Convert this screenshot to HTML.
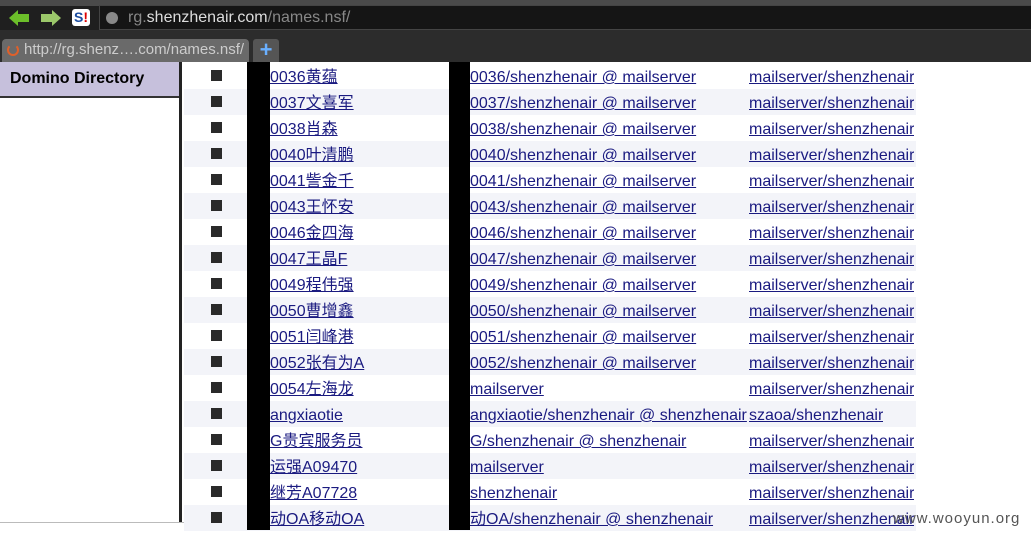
<!DOCTYPE html>
<html><head><meta charset="utf-8"><style>
*{margin:0;padding:0;box-sizing:border-box}
body{width:1031px;height:530px;overflow:hidden;background:#fff;font-family:"Liberation Sans","Noto Sans CJK SC",sans-serif;position:relative}
.top{position:absolute;left:0;top:0;width:1031px;height:8px;background:#4a4a4a}
.tb{position:absolute;left:0;top:6px;width:1031px;height:26px;background:#1f1f1f}
.tabs{position:absolute;left:0;top:30px;width:1031px;height:32px;background:#2c2c2c}
.url{position:absolute;left:99px;top:5px;width:940px;height:25px;background:#151515;border:1px solid #444;color:#888;font-size:16px;line-height:23px;padding-left:28px}
.url b{font-weight:normal;color:#ddd}
.tab{position:absolute;left:2px;top:39px;width:247px;height:23px;background:#6a6a6a;border-radius:4px 4px 0 0;color:#ccc;font-size:15px;line-height:22px;padding-left:22px}
.plus{position:absolute;left:253px;top:39px;width:26px;height:23px;background:#555;border-radius:3px 3px 0 0;color:#6ab0ff;font-size:22px;line-height:21px;text-align:center;font-weight:bold}
.left{position:absolute;left:0;top:62px;width:182px;height:468px;background:#fff;border-right:3px solid #222}
.hd{height:36px;background:#c6c0dc;border-bottom:2px solid #333;font-weight:bold;font-size:16px;padding:8px 10px}
.row{position:absolute;left:184px;height:26px;width:732px;font-size:16px;line-height:26px}
.row.alt{background:#f3f4f9}
.sq{position:absolute;left:27px;top:7px;width:11px;height:11px;background:#2a2a2a}
a{color:#1a1a80;text-decoration:underline;position:absolute;top:2px;white-space:nowrap;overflow:hidden}
.c1{left:86px;width:175px}.c2{left:286px;width:277px}.c3{left:565px}
.bar{position:absolute;top:62px;height:468px;background:#000}
.wm{position:absolute;left:893px;top:510px;color:#555;font-size:15px;letter-spacing:1px}
</style></head><body>
<div class="top"></div><div class="tb"></div><div class="tabs"></div>
<svg style="position:absolute;left:8px;top:9px" width="22" height="18"><path d="M1 9 L10 1 V5 H21 V13 H10 V17Z" fill="#6cbf2a"/></svg>
<svg style="position:absolute;left:40px;top:9px" width="22" height="18"><path d="M21 9 L12 1 V5 H1 V13 H12 V17Z" fill="#9bc86a"/></svg>
<div style="position:absolute;left:72px;top:9px;width:18px;height:17px;background:#fff;border-radius:3px;color:#1b4da0;font-weight:bold;font-size:14px;line-height:17px;text-align:center">S<span style="color:#d00">!</span></div>
<div class="url"><span style="position:absolute;left:6px;top:6px;width:12px;height:12px;border-radius:50%;background:#888"></span>rg.<b>shenzhenair.com</b>/names.nsf/</div>
<div class="tab"><span style="position:absolute;left:5px;top:5px;width:12px;height:12px;border:2px solid #e0602a;border-top-color:transparent;border-radius:50%"></span>http://rg.shenz….com/names.nsf/</div>
<div class="plus">+</div>
<div class="left"><div class="hd">Domino Directory</div></div>
<div style="position:absolute;left:0;top:522px;width:248px;height:8px;background:#fff;border-top:1px solid #bbb;border-right:1px solid #bbb"></div>
<div class="row" style="top:63px"><span class="sq"></span><a class="c1">0036黄蕴</a><a class="c2">0036/shenzhenair @ mailserver</a><a class="c3">mailserver/shenzhenair</a></div>
<div class="row alt" style="top:89px"><span class="sq"></span><a class="c1">0037文喜军</a><a class="c2">0037/shenzhenair @ mailserver</a><a class="c3">mailserver/shenzhenair</a></div>
<div class="row" style="top:115px"><span class="sq"></span><a class="c1">0038肖森</a><a class="c2">0038/shenzhenair @ mailserver</a><a class="c3">mailserver/shenzhenair</a></div>
<div class="row alt" style="top:141px"><span class="sq"></span><a class="c1">0040叶清鹏</a><a class="c2">0040/shenzhenair @ mailserver</a><a class="c3">mailserver/shenzhenair</a></div>
<div class="row" style="top:167px"><span class="sq"></span><a class="c1">0041訾金千</a><a class="c2">0041/shenzhenair @ mailserver</a><a class="c3">mailserver/shenzhenair</a></div>
<div class="row alt" style="top:193px"><span class="sq"></span><a class="c1">0043王怀安</a><a class="c2">0043/shenzhenair @ mailserver</a><a class="c3">mailserver/shenzhenair</a></div>
<div class="row" style="top:219px"><span class="sq"></span><a class="c1">0046金四海</a><a class="c2">0046/shenzhenair @ mailserver</a><a class="c3">mailserver/shenzhenair</a></div>
<div class="row alt" style="top:245px"><span class="sq"></span><a class="c1">0047王晶F</a><a class="c2">0047/shenzhenair @ mailserver</a><a class="c3">mailserver/shenzhenair</a></div>
<div class="row" style="top:271px"><span class="sq"></span><a class="c1">0049程伟强</a><a class="c2">0049/shenzhenair @ mailserver</a><a class="c3">mailserver/shenzhenair</a></div>
<div class="row alt" style="top:297px"><span class="sq"></span><a class="c1">0050曹增鑫</a><a class="c2">0050/shenzhenair @ mailserver</a><a class="c3">mailserver/shenzhenair</a></div>
<div class="row" style="top:323px"><span class="sq"></span><a class="c1">0051闫峰港</a><a class="c2">0051/shenzhenair @ mailserver</a><a class="c3">mailserver/shenzhenair</a></div>
<div class="row alt" style="top:349px"><span class="sq"></span><a class="c1">0052张有为A</a><a class="c2">0052/shenzhenair @ mailserver</a><a class="c3">mailserver/shenzhenair</a></div>
<div class="row" style="top:375px"><span class="sq"></span><a class="c1">0054左海龙</a><a class="c2">mailserver</a><a class="c3">mailserver/shenzhenair</a></div>
<div class="row alt" style="top:401px"><span class="sq"></span><a class="c1">angxiaotie</a><a class="c2">angxiaotie/shenzhenair @ shenzhenair</a><a class="c3">szaoa/shenzhenair</a></div>
<div class="row" style="top:427px"><span class="sq"></span><a class="c1">G贵宾服务员</a><a class="c2">G/shenzhenair @ shenzhenair</a><a class="c3">mailserver/shenzhenair</a></div>
<div class="row alt" style="top:453px"><span class="sq"></span><a class="c1">运强A09470</a><a class="c2">mailserver</a><a class="c3">mailserver/shenzhenair</a></div>
<div class="row" style="top:479px"><span class="sq"></span><a class="c1">继芳A07728</a><a class="c2">shenzhenair</a><a class="c3">mailserver/shenzhenair</a></div>
<div class="row alt" style="top:505px"><span class="sq"></span><a class="c1">动OA移动OA</a><a class="c2">动OA/shenzhenair @ shenzhenair</a><a class="c3">mailserver/shenzhenair</a></div>
<div class="bar" style="left:247px;width:23px"></div>
<div class="bar" style="left:449px;width:21px"></div>
<div class="wm">www.wooyun.org</div>
</body></html>
